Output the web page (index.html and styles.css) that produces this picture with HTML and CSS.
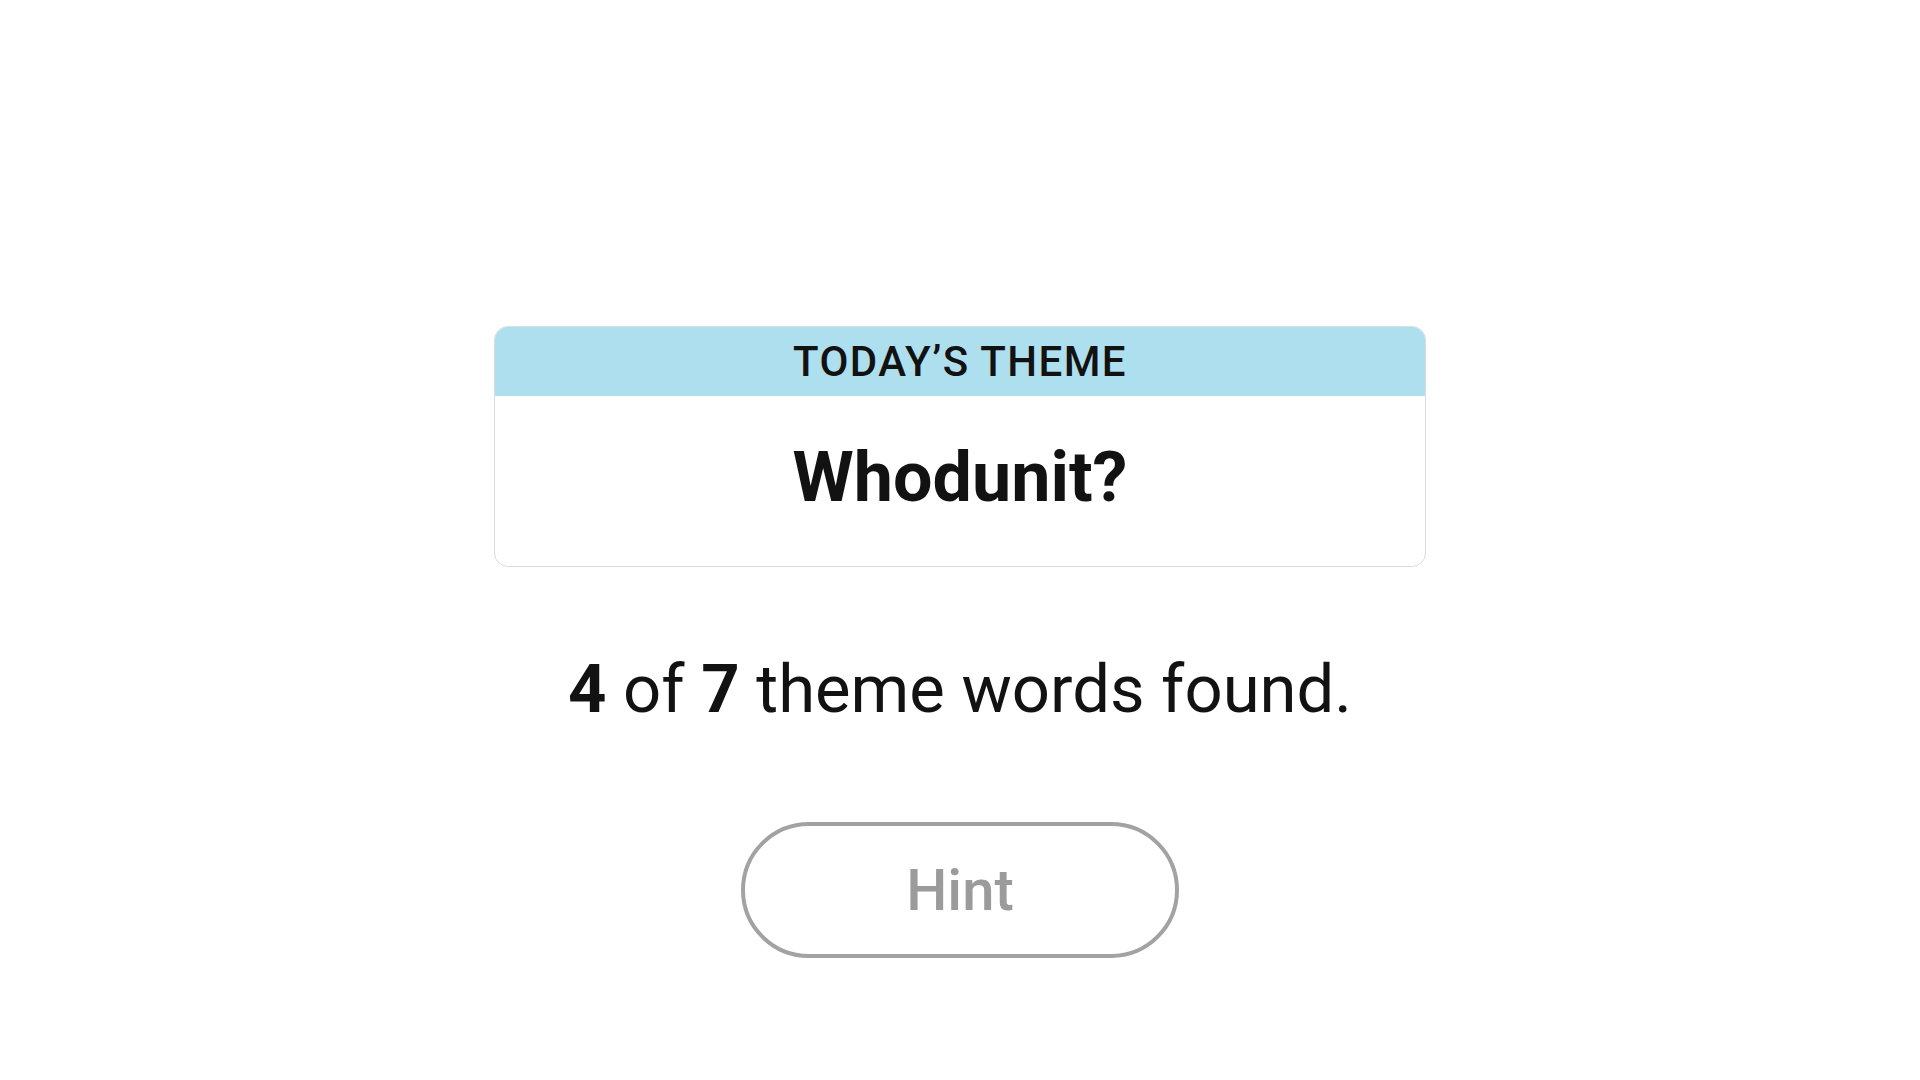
FILE: index.html
```html
<!DOCTYPE html>
<html lang="en">
<head>
<meta charset="utf-8">
<title>Today's Theme</title>
<link rel="stylesheet" href="styles.css">
</head>
<body>
<main class="page">
  <section class="theme-card">
    <div class="theme-header">TODAY’S THEME</div>
    <div class="theme-body">
      <h1 class="theme-title">Whodunit?</h1>
    </div>
  </section>
  <p class="progress"><b>4</b> of <b>7</b> theme words found.</p>
  <button class="hint-btn" type="button" disabled>Hint</button>
</main>
</body>
</html>
```

FILE: styles.css
```css
html, body {
  margin: 0;
  padding: 0;
  background: #ffffff;
}

body {
  font-family: Roboto, "Liberation Sans", Arial, sans-serif;
  color: #121212;
}

.page {
  display: flex;
  flex-direction: column;
  align-items: center;
  padding-top: 326px;
}

.theme-card {
  width: 932px;
  box-sizing: border-box;
  border: 1px solid #dcdcdc;
  border-radius: 14px;
  overflow: hidden;
  background: #ffffff;
}

.theme-header {
  height: 70px;
  margin: -1px -1px 0;
  background: #aedfee;
  display: flex;
  align-items: center;
  justify-content: center;
  padding-top: 2px;
  box-sizing: border-box;
  font-weight: 500;
  font-size: 42px;
  line-height: 1;
  letter-spacing: 1.4px;
  color: #121212;
}

.theme-body {
  padding: 39px 0 47px;
  text-align: center;
}

.theme-title {
  margin: 0;
  font-size: 70px;
  line-height: 84px;
  font-weight: 700;
  color: #121212;
}

.progress {
  margin: 82px 0 0;
  font-size: 67px;
  line-height: 80px;
  color: #121212;
}

.progress b {
  font-weight: 700;
}

.hint-btn {
  margin-top: 93px;
  width: 438px;
  height: 136px;
  box-sizing: border-box;
  border: 4px solid #a2a2a2;
  border-radius: 68px;
  background: #ffffff;
  display: flex;
  align-items: center;
  justify-content: center;
  padding: 0;
  font-family: Roboto, "Liberation Sans", Arial, sans-serif;
  font-weight: 500;
  font-size: 58px;
  color: #9b9b9b;
}
```
